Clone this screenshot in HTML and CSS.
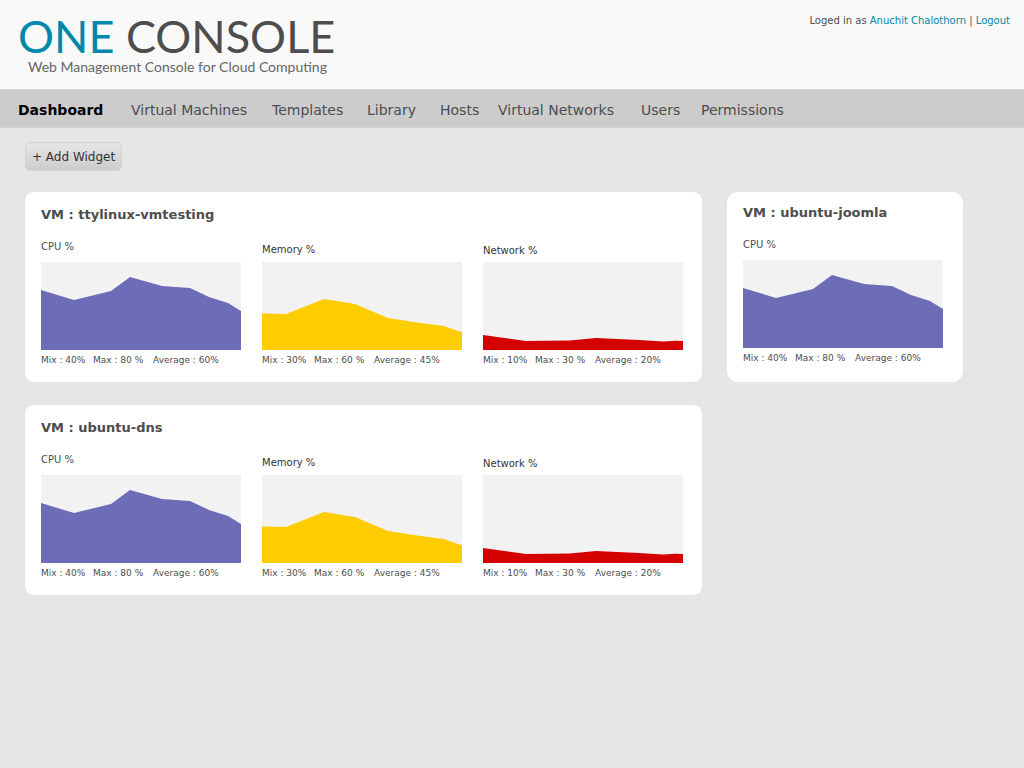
FILE: index.html
```html
<!DOCTYPE html>
<html lang="en">
<head>
<meta charset="utf-8">
<meta name="viewport" content="width=device-width, initial-scale=1">
<title>One Console</title>
<link rel="stylesheet" href="styles.css">
</head>
<body>
<header class="header">
  <div class="brand">
    <h1 class="logo"><span class="logo-accent">ONE</span> CONSOLE</h1>
    <p class="tagline">Web Management Console for Cloud Computing</p>
  </div>
  <p class="account">Loged in as <a href="#profile">Anuchit Chalothorn</a> | <a href="#logout">Logout</a></p>
</header>
<nav class="nav" aria-label="Main">
  <a class="nav-link active" href="#dashboard" aria-current="page">Dashboard</a>
  <a class="nav-link" href="#machines">Virtual Machines</a>
  <a class="nav-link" href="#templates">Templates</a>
  <a class="nav-link" href="#library">Library</a>
  <a class="nav-link" href="#hosts">Hosts</a>
  <a class="nav-link" href="#networks">Virtual Networks</a>
  <a class="nav-link" href="#users">Users</a>
  <a class="nav-link" href="#permissions">Permissions</a>
</nav>
<main class="main">
  <button class="add-button" type="button">+ Add Widget</button>
  <div class="widgets">
    <section class="card">
      <h2 class="card-title">VM : ttylinux-vmtesting</h2>
      <div class="charts">
        <figure class="chart">
          <h3 class="chart-title">CPU %</h3>
          <svg class="plot cpu" viewBox="0 0 200 88" preserveAspectRatio="none" role="img" aria-label="CPU usage"><polygon points="0,28 33,38 70,29 89,15 121,24 149,26 168,35 187,41 200,49 200,88 0,88"/></svg>
          <figcaption class="stats"><span>Mix : 40%</span><span>Max : 80 %</span><span>Average : 60%</span></figcaption>
        </figure>
        <figure class="chart">
          <h3 class="chart-title memory-title">Memory %</h3>
          <svg class="plot memory" viewBox="0 0 200 88" preserveAspectRatio="none" role="img" aria-label="Memory usage"><polygon points="0,51.5 24,52 62,37 93,42 126,56 155,60.5 182,64 196,69 200,70 200,88 0,88"/></svg>
          <figcaption class="stats"><span>Mix : 30%</span><span>Max : 60 %</span><span>Average : 45%</span></figcaption>
        </figure>
        <figure class="chart">
          <h3 class="chart-title network-title">Network %</h3>
          <svg class="plot network" viewBox="0 0 200 88" preserveAspectRatio="none" role="img" aria-label="Network usage"><polygon points="0,73 43,79 87,78.5 113,76 156,78 180,79.5 193,78.7 200,79 200,88 0,88"/></svg>
          <figcaption class="stats"><span>Mix : 10%</span><span>Max : 30 %</span><span>Average : 20%</span></figcaption>
        </figure>
      </div>
    </section>
    <section class="card card-small">
      <h2 class="card-title">VM : ubuntu-joomla</h2>
      <div class="charts">
        <figure class="chart">
          <h3 class="chart-title">CPU %</h3>
          <svg class="plot cpu" viewBox="0 0 200 88" preserveAspectRatio="none" role="img" aria-label="CPU usage"><polygon points="0,28 33,38 70,29 89,15 121,24 149,26 168,35 187,41 200,49 200,88 0,88"/></svg>
          <figcaption class="stats"><span>Mix : 40%</span><span>Max : 80 %</span><span>Average : 60%</span></figcaption>
        </figure>
      </div>
    </section>
    <section class="card">
      <h2 class="card-title">VM : ubuntu-dns</h2>
      <div class="charts">
        <figure class="chart">
          <h3 class="chart-title">CPU %</h3>
          <svg class="plot cpu" viewBox="0 0 200 88" preserveAspectRatio="none" role="img" aria-label="CPU usage"><polygon points="0,28 33,38 70,29 89,15 121,24 149,26 168,35 187,41 200,49 200,88 0,88"/></svg>
          <figcaption class="stats"><span>Mix : 40%</span><span>Max : 80 %</span><span>Average : 60%</span></figcaption>
        </figure>
        <figure class="chart">
          <h3 class="chart-title memory-title">Memory %</h3>
          <svg class="plot memory" viewBox="0 0 200 88" preserveAspectRatio="none" role="img" aria-label="Memory usage"><polygon points="0,51.5 24,52 62,37 93,42 126,56 155,60.5 182,64 196,69 200,70 200,88 0,88"/></svg>
          <figcaption class="stats"><span>Mix : 30%</span><span>Max : 60 %</span><span>Average : 45%</span></figcaption>
        </figure>
        <figure class="chart">
          <h3 class="chart-title network-title">Network %</h3>
          <svg class="plot network" viewBox="0 0 200 88" preserveAspectRatio="none" role="img" aria-label="Network usage"><polygon points="0,73 43,79 87,78.5 113,76 156,78 180,79.5 193,78.7 200,79 200,88 0,88"/></svg>
          <figcaption class="stats"><span>Mix : 10%</span><span>Max : 30 %</span><span>Average : 20%</span></figcaption>
        </figure>
      </div>
    </section>
  </div>
</main>
</body>
</html>
```
FILE: styles.css
```css
* { box-sizing: border-box; }

body {
  margin: 0;
  background: #e6e6e6;
  color: #4d4d4d;
  font-family: "DejaVu Sans", Verdana, sans-serif;
}

h1, h2, h3, p, figure { margin: 0; }

a { color: #0088aa; text-decoration: none; }

.header {
  display: flex;
  justify-content: space-between;
  align-items: flex-start;
  padding: 14px 14px 15px 18px;
  background: #f9f9f9;
}

.brand { font-family: Lato, sans-serif; }

.logo {
  font-size: 45px;
  font-weight: 400;
  line-height: 45px;
}

.logo-accent { color: #0088aa; }

.tagline {
  padding-left: 10px;
  color: #666;
  font-size: 14px;
  line-height: 15px;
}

.account {
  font-size: 10px;
  line-height: 14px;
}

.nav {
  display: grid;
  grid-template-columns: 113px 141px 95px 73px 58px 143px 60px auto;
  justify-content: start;
  padding: 4px 18px 0;
  border-top: 1px solid #d9d9d9;
  border-bottom: 1px solid #d2d2d2;
  background: #ccc;
}

.nav-link {
  color: #4d4d4d;
  font-size: 14px;
  line-height: 33px;
  white-space: nowrap;
}

.nav-link.active { color: #000; font-weight: 700; }

.main { padding: 14px 25px 24px; }

.add-button {
  display: block;
  padding: 1px 6px 0;
  border: 1px solid #d3d3d3;
  border-radius: 5px;
  background: linear-gradient(#e6e6e6, #cccccc);
  color: #333;
  font-family: inherit;
  font-size: 12px;
  line-height: 26px;
  white-space: nowrap;
}

.widgets {
  display: grid;
  grid-template-columns: minmax(0, 677px) minmax(0, 236px);
  gap: 23px 25px;
  margin-top: 21px;
}

.card {
  padding: 15px 16px 16px;
  border-radius: 8px;
  background: #fff;
  box-shadow: 0 0 1px #ccc;
}

.card-small {
  padding-top: 13px;
  border-radius: 11px;
  box-shadow: none;
}

.card-title {
  font-size: 13px;
  line-height: 16px;
}

.charts {
  display: grid;
  grid-template-columns: repeat(auto-fit, minmax(0, 200px));
  gap: 21px;
  margin-top: 18px;
}

.chart {
  display: flex;
  flex-direction: column;
  justify-content: flex-end;
}

.chart-title {
  padding-bottom: 9px;
  font-size: 10px;
  font-weight: 400;
  line-height: 12px;
}

.memory-title { padding-bottom: 6px; color: #333; }

.network-title { padding-bottom: 5px; color: #333; }

.plot {
  display: block;
  width: 100%;
  height: 88px;
  background: #f2f2f2;
}

.cpu { fill: #6c6cb7; }
.memory { fill: #ffcc00; }
.network { fill: #d40000; }

.stats {
  display: grid;
  grid-template-columns: 52px 60px auto;
  justify-content: start;
  margin-top: 4px;
  font-size: 9px;
  line-height: 12px;
  white-space: nowrap;
}
```
